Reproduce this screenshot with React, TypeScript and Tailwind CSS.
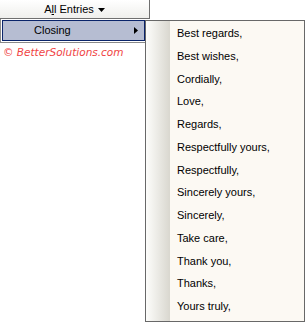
import React from 'react';

const CLOSINGS = [
  'Best regards,',
  'Best wishes,',
  'Cordially,',
  'Love,',
  'Regards,',
  'Respectfully yours,',
  'Respectfully,',
  'Sincerely yours,',
  'Sincerely,',
  'Take care,',
  'Thank you,',
  'Thanks,',
  'Yours truly,',
];

export default function App() {
  return (
    <div className="relative w-[305px] h-[322px] bg-white overflow-hidden font-['Liberation_Sans',Arial,sans-serif] text-[11px] text-black">
      {/* Toolbar button */}
      <div className="w-[150px] h-[19px] flex items-center justify-center gap-[4px] bg-gradient-to-b from-white to-[#efefec] border-r border-b border-[#6f6f6f]">
        <span>
          A<span className="underline">l</span>l Entries
        </span>
        <svg width="7" height="4" viewBox="0 0 7 4" className="mt-[1px]">
          <path d="M0 0h7L3.5 4z" fill="#000" />
        </svg>
      </div>

      {/* Main menu */}
      <div className="w-[146px] h-[24px] bg-white border-l border-b border-[#8a8a8a] pl-[1px] pt-[1px]">
        <div className="w-[143px] h-[21px] flex items-center justify-between bg-[#b6bdd2] border border-[#0a246a] pl-[31px] pr-[6px]">
          <span>Closing</span>
          <svg width="4" height="7" viewBox="0 0 4 7">
            <path d="M0 0l4 3.5L0 7z" fill="#000" />
          </svg>
        </div>
      </div>

      <div className="pl-[3px] pt-[3px] font-['DejaVu_Sans',Verdana,sans-serif] italic text-[10.5px] text-[#f04444] leading-[12px]">
        © BetterSolutions.com
      </div>

      {/* Submenu */}
      <div className="absolute left-[145px] top-[20px] w-[160px] h-[302px] flex border border-[#686868] bg-[#fcf9f3]">
        <div className="w-[24px] shrink-0 bg-gradient-to-r from-[#fdfdfb] to-[#d9d7cf]" />
        <div className="flex flex-col pt-[1px]">
          {CLOSINGS.map((c) => (
            <div key={c} className="h-[22.75px] flex items-center pl-[7px] whitespace-nowrap">
              {c}
            </div>
          ))}
        </div>
      </div>
    </div>
  );
}
